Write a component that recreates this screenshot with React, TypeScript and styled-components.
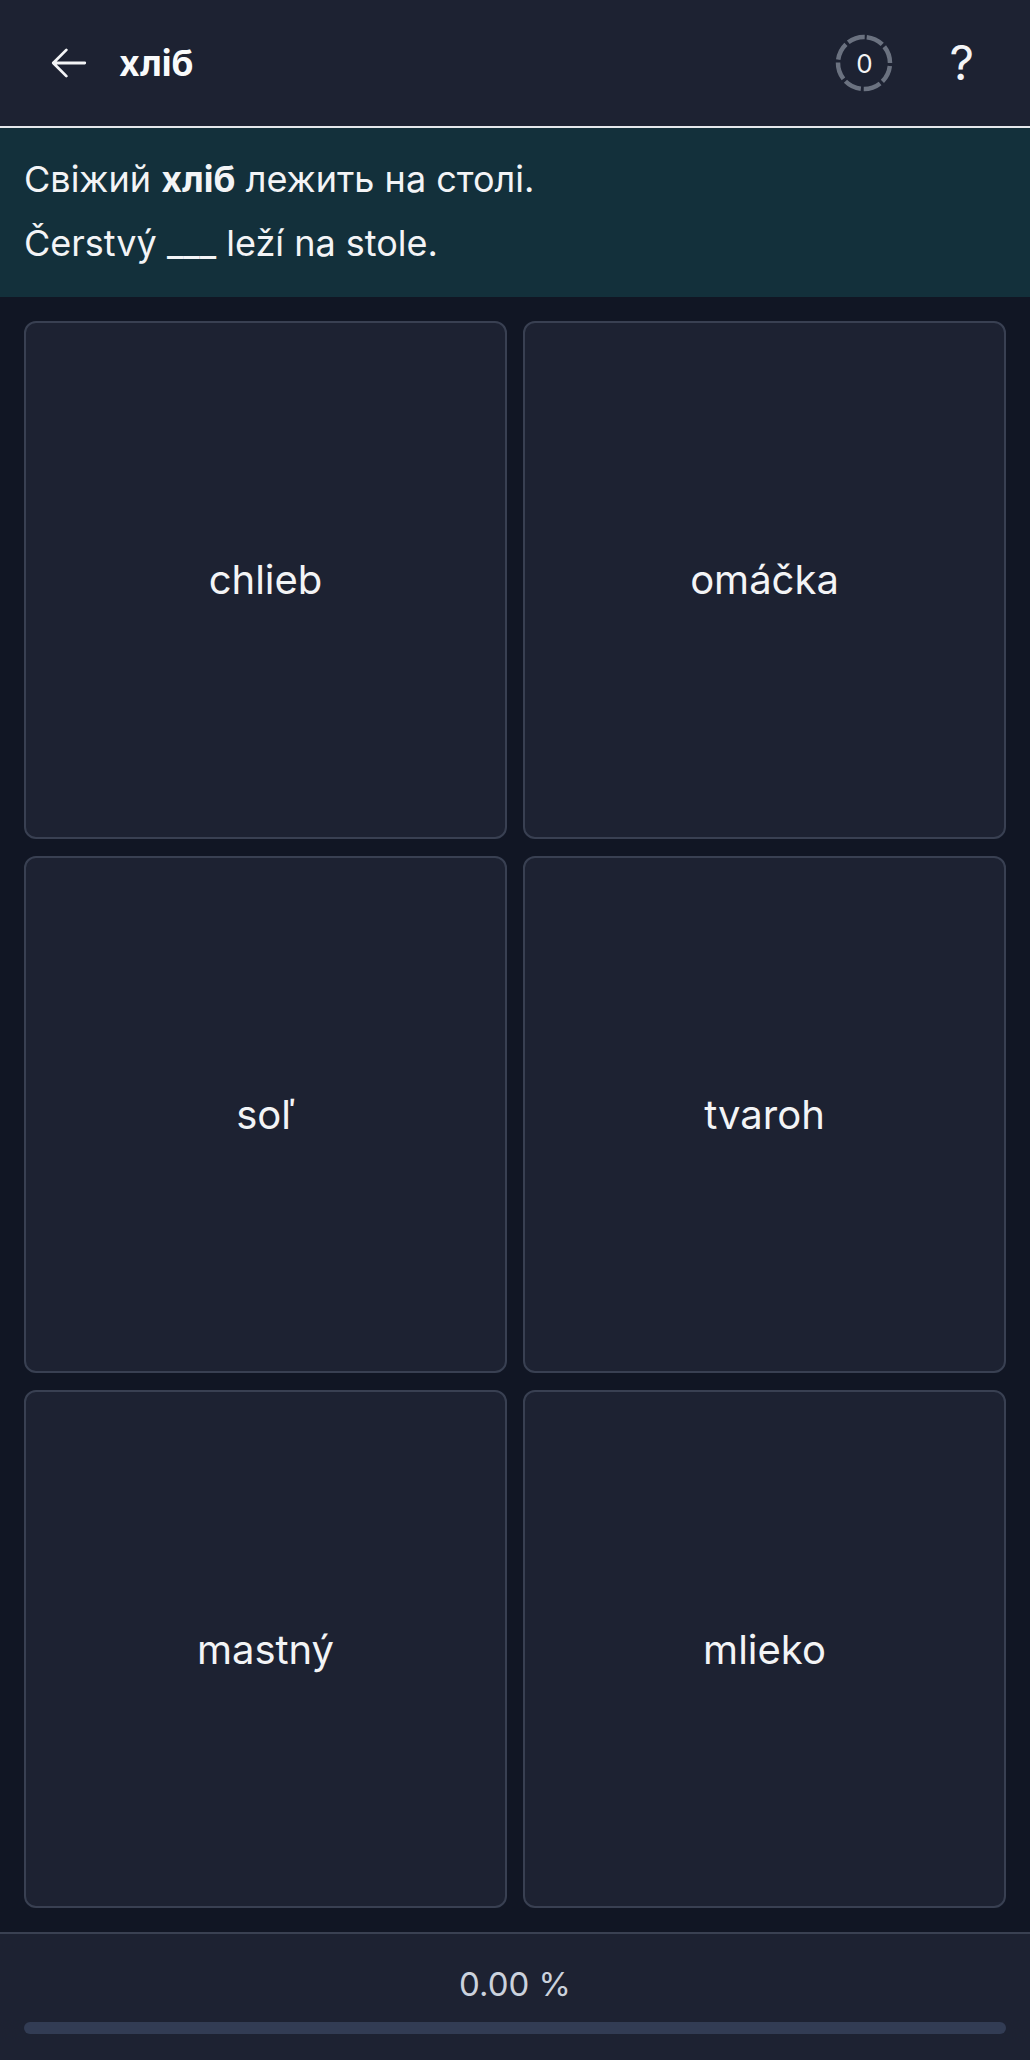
import styled, { createGlobalStyle } from 'styled-components'

const GlobalStyle = createGlobalStyle`
  html, body {
    margin: 0;
    padding: 0;
    background: #111624;
  }
  body {
    font-family: Inter, 'Noto Sans', sans-serif;
    color: #f3f4f6;
  }
  * {
    box-sizing: border-box;
  }
`

const choices = ['chlieb', 'omáčka', 'soľ', 'tvaroh', 'mastný', 'mlieko']

const Screen = styled.div`
  display: flex;
  flex-direction: column;
  width: 1030px;
  height: 2060px;
  background: #111624;
`

const TopBar = styled.header`
  display: flex;
  align-items: center;
  height: 128px;
  padding: 0 56px 0 48px;
  background: #1d2232;
  border-bottom: 2px solid #e5e7eb;
`

const BackButton = styled.button`
  display: flex;
  align-items: center;
  justify-content: center;
  padding: 0;
  border: none;
  background: none;
  color: #f3f4f6;
  cursor: pointer;
`

const Title = styled.h1`
  margin: 0 0 0 29px;
  flex: 1;
  font-size: 36px;
  font-weight: 700;
  color: #f9fafb;
`

const Counter = styled.div`
  position: relative;
  display: flex;
  align-items: center;
  justify-content: center;
  width: 58px;
  height: 58px;
  margin-right: 56px;
  font-size: 26px;
  color: #f3f4f6;

  svg {
    position: absolute;
    inset: 0;
  }
`

const Help = styled.span`
  font-size: 48px;
  font-weight: 400;
  line-height: 1;
  color: #f3f4f6;
`

const Prompt = styled.section`
  display: flex;
  flex-direction: column;
  gap: 10px;
  padding: 24px 24px 27px;
  background: #13303b;
`

const Line = styled.p`
  margin: 0;
  font-size: 36px;
  line-height: 54px;
  color: #f3f4f6;

  b {
    font-weight: 700;
  }
`

const Board = styled.main`
  flex: 1;
  display: grid;
  grid-template-columns: 1fr 1fr;
  grid-template-rows: repeat(3, 1fr);
  gap: 17px 16px;
  padding: 24px;
`

const Choice = styled.button`
  display: flex;
  align-items: center;
  justify-content: center;
  border: 2px solid #394052;
  border-radius: 12px;
  background: #1d2232;
  color: #f3f4f6;
  font-family: Inter, 'Noto Sans', sans-serif;
  font-size: 40px;
  cursor: pointer;
`

const Footer = styled.footer`
  display: flex;
  flex-direction: column;
  align-items: center;
  height: 128px;
  padding: 30px 24px 0;
  background: #1d2232;
  border-top: 2px solid #3a4152;
`

const Percent = styled.span`
  font-size: 33px;
  line-height: 40px;
  color: #cbd2dd;
`

const Track = styled.div`
  width: 100%;
  height: 12px;
  margin-top: 18px;
  border-radius: 6px;
  background: #323c54;
`

function ArrowLeft() {
  return (
    <svg width="42" height="42" viewBox="0 0 24 24" fill="none" stroke="currentColor" strokeWidth="1.6" strokeLinecap="round" strokeLinejoin="round">
      <path d="M10.5 19.5 3 12m0 0 7.5-7.5M3 12h18" />
    </svg>
  )
}

function Ring() {
  return (
    <svg width="58" height="58" viewBox="0 0 58 58">
      <circle
        cx="29"
        cy="29"
        r="26"
        fill="none"
        stroke="#6b7280"
        strokeWidth="4.5"
        strokeDasharray="17.4 3"
        transform="rotate(-84 29 29)"
      />
    </svg>
  )
}

export default function App() {
  return (
    <>
      <GlobalStyle />
      <Screen>
        <TopBar>
          <BackButton aria-label="back">
            <ArrowLeft />
          </BackButton>
          <Title>хліб</Title>
          <Counter>
            <Ring />
            0
          </Counter>
          <Help>?</Help>
        </TopBar>
        <Prompt>
          <Line>
            Свіжий <b>хліб</b> лежить на столі.
          </Line>
          <Line>Čerstvý ___ leží na stole.</Line>
        </Prompt>
        <Board>
          {choices.map((word) => (
            <Choice key={word}>{word}</Choice>
          ))}
        </Board>
        <Footer>
          <Percent>0.00 %</Percent>
          <Track />
        </Footer>
      </Screen>
    </>
  )
}
